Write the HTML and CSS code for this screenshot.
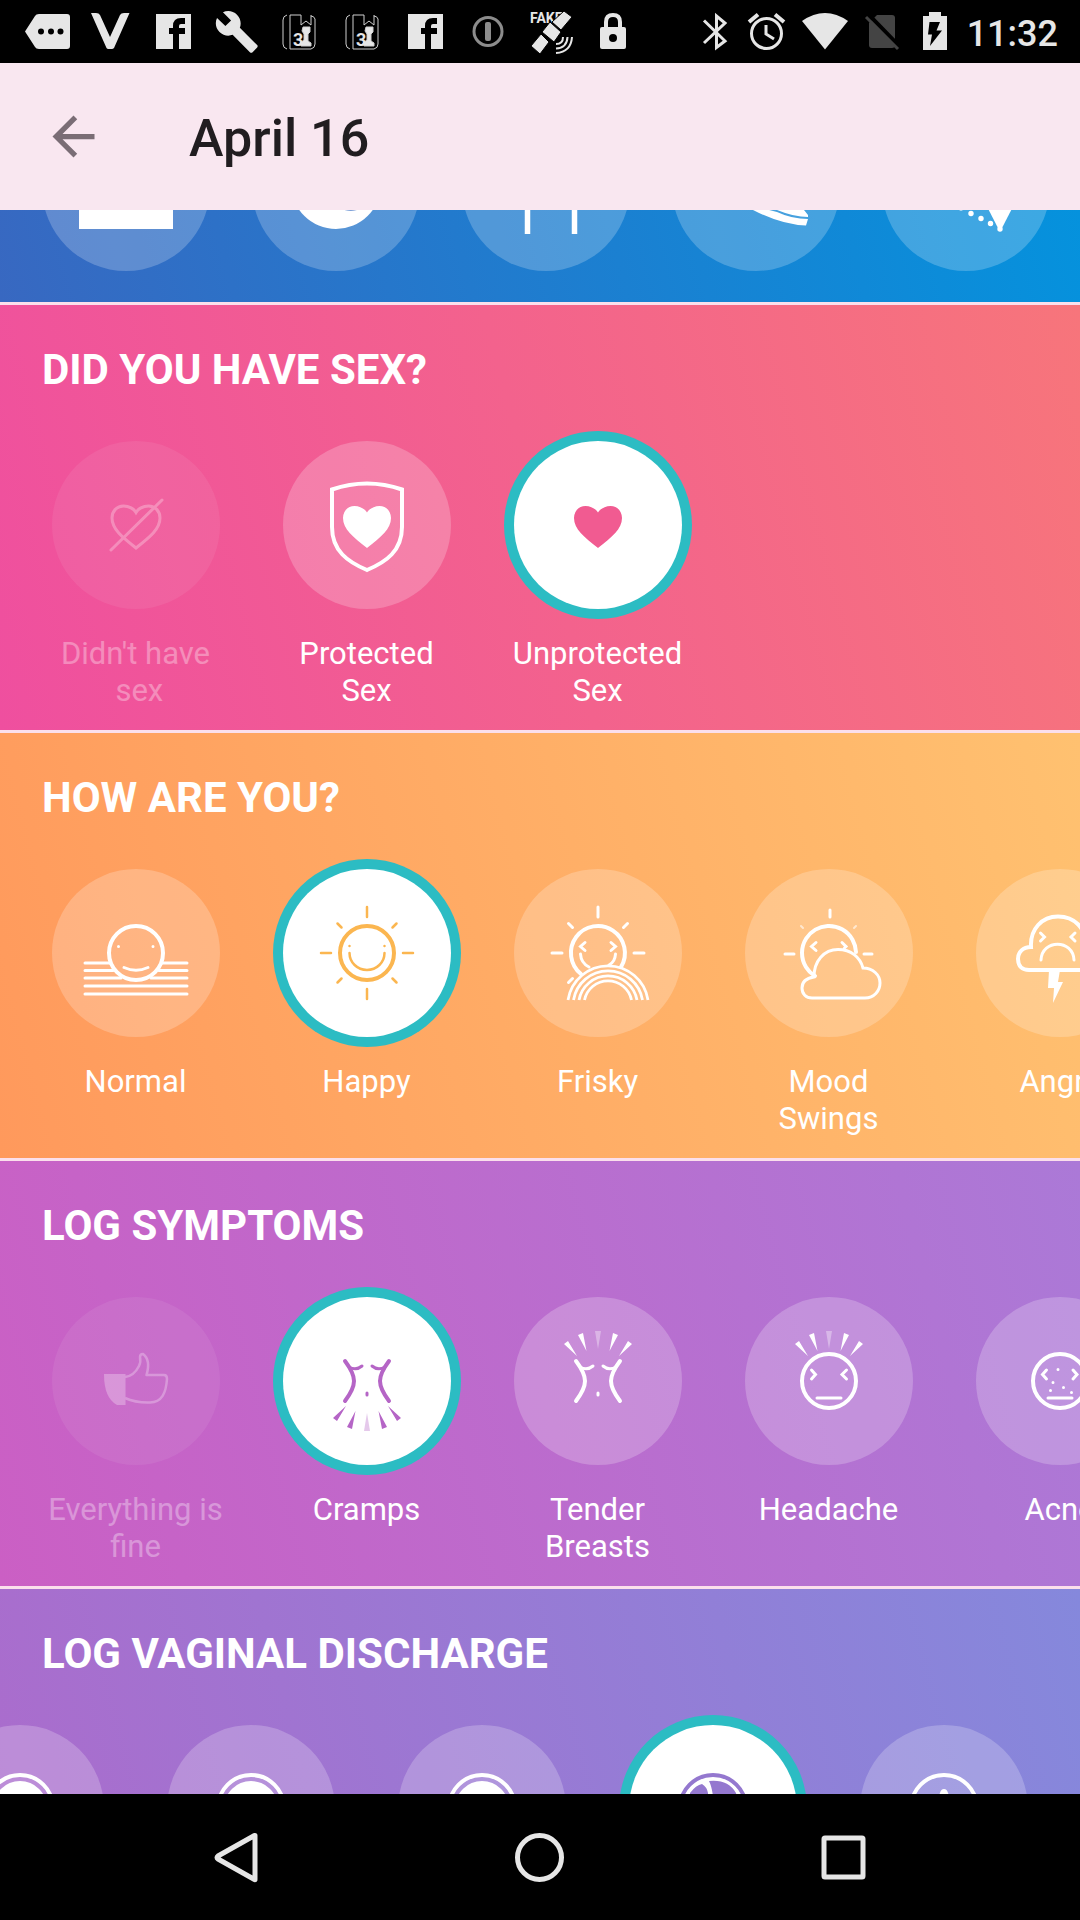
FILE: index.html
```html
<!DOCTYPE html>
<html lang="en">
<head>
<meta charset="utf-8">
<meta name="viewport" content="width=device-width, initial-scale=1">
<title>April 16</title>
<link rel="stylesheet" href="styles.css">
</head>
<body>
<svg class="defs" aria-hidden="true">
  <defs>
    <path id="heart" d="M84 107C70 96 60 88 60 77C60 70 65 65 71.500 65C77 65 82 68 84 71.500C86 68 91 65 96.500 65C103 65 108 70 108 77C108 88 98 96 84 107Z"/>
    <g id="torso" fill="none" stroke="currentColor" stroke-linecap="round">
      <path stroke-width="4" d="M62 64C74 80 74 88 62 104M106 64C94 80 94 88 106 104"/>
      <path stroke-width="3" d="M66 70Q73 74 79 69M102 70Q95 74 89 69M84 96V98"/>
    </g>
    <g id="pain" fill="currentColor">
      <path d="M63 59L50 47L54 44ZM72.500 54L64 38L69 36ZM105 59L118 47L114 44ZM95.500 54L104 38L99 36Z"/>
      <path opacity=".35" d="M84 52L81 34H87Z"/>
    </g>
    <circle id="face" cx="84" cy="84" r="27" stroke-width="4"/>
    <g id="facebook">
      <path fill="#e6e6e6" d="M14 14H49V49H14Z"/>
      <path fill="none" stroke="#000" stroke-width="6" d="M34 49V26Q34 21 39 21H43M27 31H43"/>
    </g>
    <g id="book" fill="none" stroke="#cfcfcf" stroke-width="1">
      <path d="M19 15Q15 16 15 20V44Q15 48 19 49M22 15H33V25L38 21L43 25V15M22 15V49H43Q47 48 47 44V19Q46 16 43 16"/>
      <path fill="#e6e6e6" d="M35 27H42V32L40 34V41L43 43V46H33L32 43L36 40V34L34 31Z"/>
      <text class="book-digit" x="25" y="46">3</text>
    </g>
  </defs>
</svg>

<div class="app">
  <div class="status">
    <div class="status-group">
      <svg width="63" height="63" viewBox="0 0 63 63"><path fill="#e6e6e6" d="M9 31.500L19 16Q20 14 23 14H51Q54 14 54 17V46Q54 49 51 49H23Q20 49 19 47Z"/><circle cx="25" cy="31.500" r="3"/><circle cx="35" cy="31.500" r="3"/><circle cx="44.500" cy="31.500" r="3"/></svg>
      <svg width="63" height="63" viewBox="0 0 63 63"><path fill="#e6e6e6" d="M12 13H17Q20 13 21 15L31 37L41 15Q42 13 45 13H50.500L35 48Q34 49 33 49H29.500Q28 49 27.500 48Z"/></svg>
      <svg width="63" height="63" viewBox="0 0 63 63"><use href="#facebook"/></svg>
      <svg width="63" height="63" viewBox="0 0 63 63"><path fill="#e6e6e6" transform="translate(9 9) scale(1.900)" d="M22.700 19l-9.100-9.100c.9-2.300.4-5-1.500-6.900-2-2-5-2.400-7.400-1.300L9 6 6 9 1.600 4.700C.4 7.100.9 10.100 2.900 12.100c1.900 1.900 4.600 2.400 6.900 1.500l9.100 9.100c.4.400 1 .4 1.400 0l2.300-2.300c.5-.4.500-1.100.1-1.400z"/></svg>
      <svg width="63" height="63" viewBox="0 0 63 63"><use href="#book"/></svg>
      <svg width="63" height="63" viewBox="0 0 63 63"><use href="#book"/></svg>
      <svg width="63" height="63" viewBox="0 0 63 63"><use href="#facebook"/></svg>
      <svg width="63" height="63" viewBox="0 0 63 63"><circle cx="31" cy="31.500" r="14" fill="none" stroke="#8c8c8c" stroke-width="3"/><rect x="28" y="22" width="6" height="19" rx="2" fill="#8c8c8c"/></svg>
      <svg width="63" height="63" viewBox="0 0 63 63"><text class="fake" x="10" y="23">FAKE</text><g fill="#e6e6e6" stroke="#000" stroke-width="1"><path d="M44 11L52 17L41 30L32 22Z"/><path d="M30 22L41 32L34 42L22 32Z"/><path d="M21 34L29 42L20 54L11 46Z"/></g><path fill="none" stroke="#e6e6e6" stroke-width="2" d="M43 37Q43 44 36 44M47.500 37Q47 48 36 48.500M52 37Q51 52 36 53"/></svg>
      <svg width="63" height="63" viewBox="0 0 63 63"><path fill="none" stroke="#e6e6e6" stroke-width="4" d="M23 29V22Q23 15 30 15Q37 15 37 22V29"/><rect x="17" y="27" width="26" height="22" rx="2" fill="#e6e6e6"/><circle cx="30" cy="38" r="4"/></svg>
    </div>
    <div class="status-group">
      <svg width="52" height="63" viewBox="0 0 52 63"><path fill="none" stroke="#e6e6e6" stroke-width="3" d="M15 20.500L36 41L27.500 47.500V16L36 23L15 43"/></svg>
      <svg width="52" height="63" viewBox="0 0 52 63"><g fill="none" stroke="#e6e6e6" stroke-width="3"><circle cx="25.500" cy="33.500" r="15"/><path d="M25 25V34L33 39"/><path stroke-width="4" d="M8 22L17 14.500M43 22L34 14.500"/></g></svg>
      <svg width="64" height="63" viewBox="0 0 64 63"><path fill="#e6e6e6" d="M9 21Q32 5 55 21L32 49.500Z"/></svg>
      <svg width="50" height="63" viewBox="0 0 50 63"><path fill="#444" d="M20 15H35Q38 15 38 18V45Q38 48 35 48H15Q12 48 12 45V23Z"/><path stroke="#000" stroke-width="4" d="M11 14L44 48"/><path stroke="#444" stroke-width="3" d="M9 17L41 49"/></svg>
      <svg width="56" height="63" viewBox="0 0 56 63"><path fill="#e6e6e6" d="M22 12H34V16H40V50H16V16H22Z"/><path d="M22.500 22H33L29.500 30.500H35L23 46L25 34.500H21Z"/></svg>
      <time class="clock">11:32</time>
    </div>
  </div>

  <header class="toolbar">
    <button class="back" aria-label="Back"><svg width="63" height="63" viewBox="0 0 24 24"><path fill="#7a6d75" d="M20 11H7.830l5.590-5.590L12 4l-8 8 8 8 1.410-1.410L7.830 13H20v-2z"/></svg></button>
    <h1 class="title">April 16</h1>
  </header>

  <main class="log">
    <section class="section section-blue" aria-label="Activity">
      <ul class="row">
        <li><button class="item" aria-label="Scale"><svg class="disc" viewBox="0 0 168 168"><path fill="currentColor" d="M37 60H131V126H37Z"/></svg></button></li>
        <li><button class="item" aria-label="Ball"><svg class="disc" viewBox="0 0 168 168"><circle fill="currentColor" cx="84" cy="81" r="45"/><path fill="#4f7fca" d="M89 106Q99 109.500 108 106Z"/></svg></button></li>
        <li><button class="item" aria-label="Frame"><svg class="disc" viewBox="0 0 168 168"><path fill="none" stroke="currentColor" stroke-width="5.500" d="M65.500 131V60H112.500V131"/></svg></button></li>
        <li><button class="item" aria-label="Shoe"><svg class="disc" viewBox="0 0 168 168"><path fill="currentColor" d="M70 100L105 109Q120 116 136 116L134 122.500Q110 122 81 107ZM98 100H126L132 107L136 112V114Q122 114 105 107Z"/></svg></button></li>
        <li><button class="item" aria-label="Party"><svg class="disc" viewBox="0 0 168 168"><g fill="currentColor"><circle cx="79" cy="105" r="2.500"/><circle cx="89" cy="110.500" r="2.700"/><circle cx="99" cy="115.500" r="2.700"/><circle cx="108.500" cy="120.500" r="2.700"/><path d="M98 90H138L120 125H116Z"/><circle cx="118" cy="126" r="2.700"/></g></svg></button></li>
      </ul>
    </section>

    <section class="section section-pink">
      <h2 class="heading">DID YOU HAVE SEX?</h2>
      <ul class="row">
        <li><button class="item faded"><svg class="disc" viewBox="0 0 168 168"><g fill="none" stroke="currentColor" stroke-width="3"><use href="#heart"/><path stroke-linecap="round" d="M59 109L110 59"/></g></svg><span class="label">Didn't have<br>&nbsp;sex</span></button></li>
        <li><button class="item"><svg class="disc" viewBox="0 0 168 168"><path fill="none" stroke="currentColor" stroke-width="4" d="M49 48.500Q84 36.500 119 48.500V86C119 110 103 121 84 129C65 121 49 110 49 86Z"/><use href="#heart" fill="currentColor"/></svg><span class="label">Protected Sex</span></button></li>
        <li><button class="item selected" aria-pressed="true"><svg class="disc" viewBox="0 0 168 168"><use href="#heart" fill="currentColor"/></svg><span class="label">Unprotected Sex</span></button></li>
      </ul>
    </section>

    <section class="section section-orange">
      <h2 class="heading">HOW ARE YOU?</h2>
      <ul class="row">
        <li><button class="item"><svg class="disc" viewBox="0 0 168 168"><g fill="none" stroke="currentColor" stroke-width="3" stroke-linecap="round"><use href="#face"/><path d="M33 94H58M110 94H135M33 101.500H61M107 101.500H135M33 109H69M99 109H135M33 117H135M33 125H135M72 98.500Q84 104 96 98.500M66.500 77.500V77.600M101 77.500V77.600"/></g></svg><span class="label">Normal</span></button></li>
        <li><button class="item selected" aria-pressed="true"><svg class="disc" viewBox="0 0 168 168"><g fill="none" stroke="currentColor" stroke-width="2.500" stroke-linecap="round"><use href="#face"/><path d="M84 38V48M84 120V130M38 84H48M120 84H130M54.500 54.500L58.500 58.500M113.500 54.500L109.500 58.500M54.500 113.500L58.500 109.500M113.500 113.500L109.500 109.500M66.500 84A17.500 17 0 0 0 101.500 84M66.500 77V77.100M101.500 77V77.100"/></g></svg><span class="label">Happy</span></button></li>
        <li><button class="item"><svg class="disc" viewBox="0 0 168 168"><g fill="none" stroke="currentColor" stroke-width="3" stroke-linecap="round"><path stroke-width="4" d="M67 105A27 27 0 1 1 107 98"/><path d="M84 38V48M38 84H48M120 84H130M54.500 54.500L58.500 58.500M113.500 54.500L109.500 58.500M54.500 113.500L58.500 109.500M71 73.500L66.500 77.500L71 81.500M97 73.500L101.500 77.500L97 81.500M66.500 85Q67 94 75 98M101.500 85Q101 93 95 96"/><g stroke-width="2.800" stroke-linecap="butt"><path d="M54 131A40.500 40.500 0 0 1 134 131M59.500 131A35 35 0 0 1 128.500 131M65 131A29.500 29.500 0 0 1 123 131M70.500 131A24 24 0 0 1 117.500 131"/></g></g></svg><span class="label">Frisky</span></button></li>
        <li><button class="item"><svg class="disc" viewBox="0 0 168 168"><g fill="none" stroke="currentColor" stroke-width="3" stroke-linecap="round"><path stroke-width="4" d="M70 107A27 27 0 1 1 111 83"/><path d="M85 41V48M40 85H49M119 85H127M71 73.500L66.500 77.500L71 81.500M97 73.500L101 77.500L99.500 79M67 129H120C129 129 135 122 135 114C135 106 128 99 118 99C115 88 106 80.500 93 80.500C79 80.500 69 92 69 108C62 109 57 112 57 119C57 125 61 129 67 129Z"/><path stroke-width="2" opacity=".6" d="M56 57L58 59M111 57L109 59"/></g></svg><span class="label">Mood Swings</span></button></li>
        <li><button class="item"><svg class="disc" viewBox="0 0 168 168"><g fill="none" stroke="currentColor" stroke-width="3" stroke-linecap="round"><path stroke-width="4" d="M53 101H110C122 101 126 95 126 90C126 82 120 78 109 77C111 59 98 47.500 82 47.500C66 47.500 54 60 55 78C47 78 42 83 42 90C42 97 46 101 53 101Z"/><path d="M64.500 64L68.500 68L64.500 72M99 64L95 68L99 72M65 91C66 70 97 70 98 91"/></g><path fill="currentColor" d="M73 101H84L82 113H87L77 134L78 119H72Z"/></svg><span class="label">Angry</span></button></li>
      </ul>
    </section>

    <section class="section section-purple">
      <h2 class="heading">LOG SYMPTOMS</h2>
      <ul class="row">
        <li><button class="item faded"><svg class="disc" viewBox="0 0 168 168"><path fill="currentColor" d="M52 77H73.500V108H65Q52 101 52 77Z"/><path fill="none" stroke="currentColor" stroke-width="2.500" stroke-linejoin="round" d="M73 80Q82 79 87 69Q89 65 88 60Q88 57 91 57Q99 63 94.500 78H112Q115 78 115 82C114 96 110 105 98 105.500Q84 106 73 101"/></svg><span class="label">Everything is fine</span></button></li>
        <li><button class="item selected" aria-pressed="true"><svg class="disc" viewBox="0 0 168 168"><use href="#torso"/><use href="#pain" transform="translate(0 168) scale(1 -1)"/></svg><span class="label">Cramps</span></button></li>
        <li><button class="item"><svg class="disc" viewBox="0 0 168 168"><use href="#torso"/><use href="#pain"/></svg><span class="label">Tender Breasts</span></button></li>
        <li><button class="item"><svg class="disc" viewBox="0 0 168 168"><use href="#pain"/><g fill="none" stroke="currentColor" stroke-width="3" stroke-linecap="round"><use href="#face"/><path d="M66.500 73L70.500 77.500L66.500 82M101.500 73L97 77.500L101.500 82M72 101H96"/></g></svg><span class="label">Headache</span></button></li>
        <li><button class="item"><svg class="disc" viewBox="0 0 168 168"><g fill="none" stroke="currentColor" stroke-width="3" stroke-linecap="round"><use href="#face"/><path d="M70.500 73L66.500 77.500L70.500 82M97 73L101 77.500L97 82M72 101H96M82 72.500V72.600M77 85.500V85.600M74.500 93.500V93.600M87.500 90.500V90.600M95.500 95.500V95.600"/></g></svg><span class="label">Acne</span></button></li>
      </ul>
    </section>

    <section class="section section-violet">
      <h2 class="heading">LOG VAGINAL DISCHARGE</h2>
      <ul class="row row-scrolled">
        <li><button class="item" aria-label="Dry"><svg class="disc" viewBox="0 0 168 168"><circle cx="84" cy="83" r="33" fill="none" stroke="currentColor" stroke-width="4"/><circle cx="84" cy="83" r="27" fill="currentColor"/></svg></button></li>
        <li><button class="item" aria-label="Sticky"><svg class="disc" viewBox="0 0 168 168"><circle cx="84" cy="83" r="33" fill="none" stroke="currentColor" stroke-width="4"/><circle cx="84" cy="83" r="27" fill="currentColor"/></svg></button></li>
        <li><button class="item" aria-label="Creamy"><svg class="disc" viewBox="0 0 168 168"><circle cx="84" cy="83" r="33" fill="none" stroke="currentColor" stroke-width="4"/><circle cx="84" cy="83" r="27" fill="currentColor"/></svg></button></li>
        <li><button class="item selected" aria-label="Egg white" aria-pressed="true"><svg class="disc" viewBox="0 0 168 168"><circle cx="84" cy="83" r="33" fill="none" stroke="currentColor" stroke-width="4"/><path fill="currentColor" d="M61 68Q67 60 73 59Q78 62 79 68V90H61ZM80 56Q99 54 107 68L112 90H85Q85 66 80 56Z"/></svg></button></li>
        <li><button class="item" aria-label="Watery"><svg class="disc" viewBox="0 0 168 168"><circle cx="84" cy="83" r="33" fill="none" stroke="currentColor" stroke-width="4"/><path fill="currentColor" d="M84 64Q87 64 88 68L96 84H72L80 68Q81 64 84 64Z"/></svg></button></li>
      </ul>
    </section>
  </main>

  <nav class="navbar" aria-label="System">
    <button class="nav-button" aria-label="Back"><svg width="63" height="63" viewBox="0 0 63 63"><path d="M50 9.500V53.500Q50 54 49.500 53.500L13 33Q11 31.500 13 30L49.500 9.500Z"/></svg></button>
    <button class="nav-button" aria-label="Home"><svg width="63" height="63" viewBox="0 0 63 63"><circle cx="31.500" cy="31.500" r="22"/></svg></button>
    <button class="nav-button" aria-label="Recent apps"><svg width="63" height="63" viewBox="0 0 63 63"><rect x="12" y="12" width="39" height="39" rx="1"/></svg></button>
  </nav>
</div>
</body>
</html>
```
FILE: styles.css
```css
* {
  box-sizing: border-box;
}

body {
  margin: 0;
  font-family: Roboto, "Liberation Sans", sans-serif;
  background: #000;
}

button {
  margin: 0;
  padding: 0;
  border: 0;
  background: none;
  color: inherit;
  font: inherit;
}

svg {
  display: block;
}

.defs {
  position: absolute;
  width: 0;
  height: 0;
}

.app {
  display: flex;
  flex-direction: column;
  height: 100vh;
  overflow: hidden;
}

/* Status bar */

.status {
  display: flex;
  flex: none;
  justify-content: space-between;
  height: 63px;
  padding: 0 22px 0 16px;
  overflow: hidden;
  background: #000;
  color: #e6e6e6;
}

.status-group {
  display: flex;
  align-items: center;
}

.clock {
  padding: 4px 0 0 4px;
  font-size: 36px;
  line-height: 44px;
  font-weight: 500;
}

.fake {
  fill: #e6e6e6;
  font-size: 14px;
  font-weight: 700;
}

.book-digit {
  fill: #e6e6e6;
  stroke: none;
  font-size: 18px;
  font-weight: 700;
}

/* Toolbar */

.toolbar {
  display: flex;
  flex: none;
  align-items: center;
  gap: 84px;
  height: 147px;
  padding: 0 42px;
  background: #f9e7f0;
}

.title {
  margin: 0;
  padding-top: 5px;
  color: #211d20;
  font-size: 52px;
  line-height: 62px;
  font-weight: 500;
}

/* Log sections */

.log {
  display: flex;
  flex: 1;
  flex-direction: column;
  min-height: 0;
  overflow: hidden;
}

.section {
  flex: none;
  min-height: 428px;
  padding: 40px 0 21px;
  overflow: hidden;
  border-top: 3px solid #fbdfec;
  color: #fff;
}

.section-blue {
  display: flex;
  align-items: flex-end;
  height: 92px;
  min-height: 0;
  padding: 0 0 31px;
  border-top: 0;
  background: linear-gradient(75deg, #3868c1, #0592dd);
}

.section-pink {
  --ink: #f15b91;
  background: linear-gradient(75deg, #ef4f9f, #f7757b);
}

.section-orange {
  --ink: #fbb650;
  background: linear-gradient(75deg, #ff995c, #ffc170);
}

.section-purple {
  --ink: #b565c6;
  background: linear-gradient(75deg, #cb5fc4, #ab79d7);
}

.section-violet {
  --ink: #9478cf;
  background: linear-gradient(75deg, #ac6bcc, #8588dc);
}

.heading {
  margin: 0 0 46px;
  padding-left: 42px;
  font-size: 42px;
  line-height: 50px;
  font-weight: 700;
}

.row {
  display: flex;
  margin: 0;
  padding: 0 0 0 20px;
  list-style: none;
}

.section-blue .row {
  padding-left: 21px;
}

.row-scrolled {
  margin-left: -116px;
}

.item {
  display: flex;
  flex-direction: column;
  align-items: center;
  gap: 26px;
  width: 231px;
}

.section-blue .item {
  width: 210px;
}

.disc {
  width: 168px;
  height: 168px;
  border-radius: 50%;
  background: rgba(255, 255, 255, 0.22);
}

.label {
  padding: 0 26px;
  font-size: 31px;
  line-height: 37px;
  text-align: center;
}

.faded {
  opacity: 0.33;
}

.selected .disc {
  background: #fff;
  box-shadow: 0 0 0 10px #2cbcc3;
  color: var(--ink);
}

/* Navigation bar */

.navbar {
  display: grid;
  flex: none;
  grid-template-columns: repeat(3, 1fr);
  height: 126px;
  padding: 0 85px;
  background: #000;
}

.nav-button {
  display: flex;
  align-items: center;
  justify-content: center;
}

.nav-button svg {
  fill: none;
  stroke: #e6e6e6;
  stroke-width: 5px;
  stroke-linejoin: round;
}
```
